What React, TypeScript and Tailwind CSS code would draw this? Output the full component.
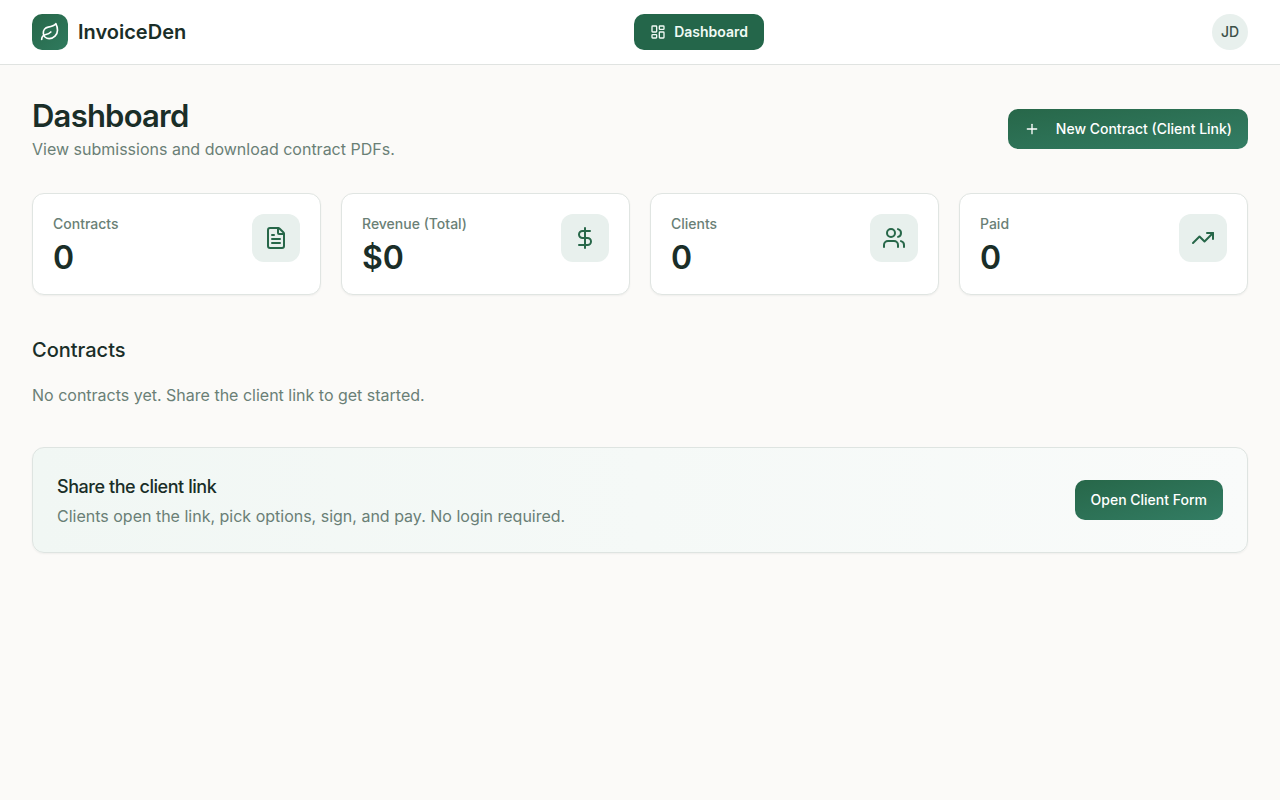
import { DollarSign, FileText, LayoutDashboard, Leaf, Plus, TrendingUp, Users } from 'lucide-react'
import type { LucideIcon } from 'lucide-react'

interface StatCardProps {
  label: string
  value: string
  icon: LucideIcon
}

const stats: StatCardProps[] = [
  { label: 'Contracts', value: '0', icon: FileText },
  { label: 'Revenue (Total)', value: '$0', icon: DollarSign },
  { label: 'Clients', value: '0', icon: Users },
  { label: 'Paid', value: '0', icon: TrendingUp },
]

const StatCard = ({ label, value, icon: Icon }: StatCardProps) => (
  <div className="flex items-start justify-between rounded-xl border border-[#e0e5e2] bg-white p-5 shadow-xs">
    <div>
      <p className="text-sm font-medium text-[#6a7f76]">{label}</p>
      <p className="mt-2 text-[32px] leading-8 font-semibold text-[#1a2e28]">{value}</p>
    </div>
    <div className="flex h-12 w-12 items-center justify-center rounded-xl bg-[#e8f0ed]">
      <Icon className="h-6 w-6 text-[#276749]" />
    </div>
  </div>
)

const Header = () => (
  <header className="border-b border-[#e0e3e1] bg-white">
    <div className="flex h-16 items-center justify-between px-8">
      <a href="#" className="flex items-center gap-2.5">
        <span className="flex h-9 w-9 items-center justify-center rounded-[10px] bg-linear-to-br from-[#276749] to-[#2f7a5e]">
          <Leaf className="h-5 w-5 text-white" />
        </span>
        <span className="text-xl font-semibold text-[#1a2e28]">InvoiceDen</span>
      </a>
      <nav>
        <a
          href="#"
          className="flex h-9 items-center gap-2 rounded-[10px] bg-[#24664a] px-4 text-sm font-semibold text-[#f0faf5]"
        >
          <LayoutDashboard className="h-4 w-4" />
          Dashboard
        </a>
      </nav>
      <button
        type="button"
        className="flex h-9 w-9 items-center justify-center rounded-full bg-[#e8f0ed] text-sm font-medium text-[#3d5149]"
      >
        JD
      </button>
    </div>
  </header>
)

const App = () => {
  return (
    <div className="min-h-screen bg-[#fbfaf8] font-[Inter,sans-serif] text-[#1a2e28]">
      <Header />

      <main className="px-8 py-8">
        {/* Page title */}
        <div className="mb-8 flex items-center justify-between">
          <div>
            <h1 className="text-[31px] leading-[38px] font-semibold tracking-tight">Dashboard</h1>
            <p className="mt-0.5 text-[#6a7f76]">View submissions and download contract PDFs.</p>
          </div>
          <button
            type="button"
            className="flex h-10 items-center gap-4 rounded-[10px] bg-linear-to-br from-[#276749] to-[#337d64] px-4 text-sm font-medium text-white"
          >
            <Plus className="h-4 w-4" />
            New Contract (Client Link)
          </button>
        </div>

        {/* Stats */}
        <div className="grid grid-cols-2 gap-5 lg:grid-cols-4">
          {stats.map((stat) => (
            <StatCard key={stat.label} {...stat} />
          ))}
        </div>

        {/* Contracts */}
        <section className="mt-10">
          <h2 className="text-xl leading-[30px] font-medium">Contracts</h2>
          <p className="mt-[18px] text-[#6a7f76]">No contracts yet. Share the client link to get started.</p>
        </section>

        {/* Client link */}
        <section className="mt-10 flex items-center justify-between rounded-xl border border-[#dee4e1] bg-linear-to-r from-[#f1f7f4] to-[#f9fbfa] p-6 shadow-xs">
          <div>
            <h3 className="text-lg leading-[30px] font-medium tracking-tight">Share the client link</h3>
            <p className="mt-0.5 text-[#6a7f76]">Clients open the link, pick options, sign, and pay. No login required.</p>
          </div>
          <button
            type="button"
            className="h-10 rounded-[10px] bg-linear-to-br from-[#276749] to-[#337d64] px-4 text-sm font-medium text-white"
          >
            Open Client Form
          </button>
        </section>
      </main>
    </div>
  )
}

export default App
